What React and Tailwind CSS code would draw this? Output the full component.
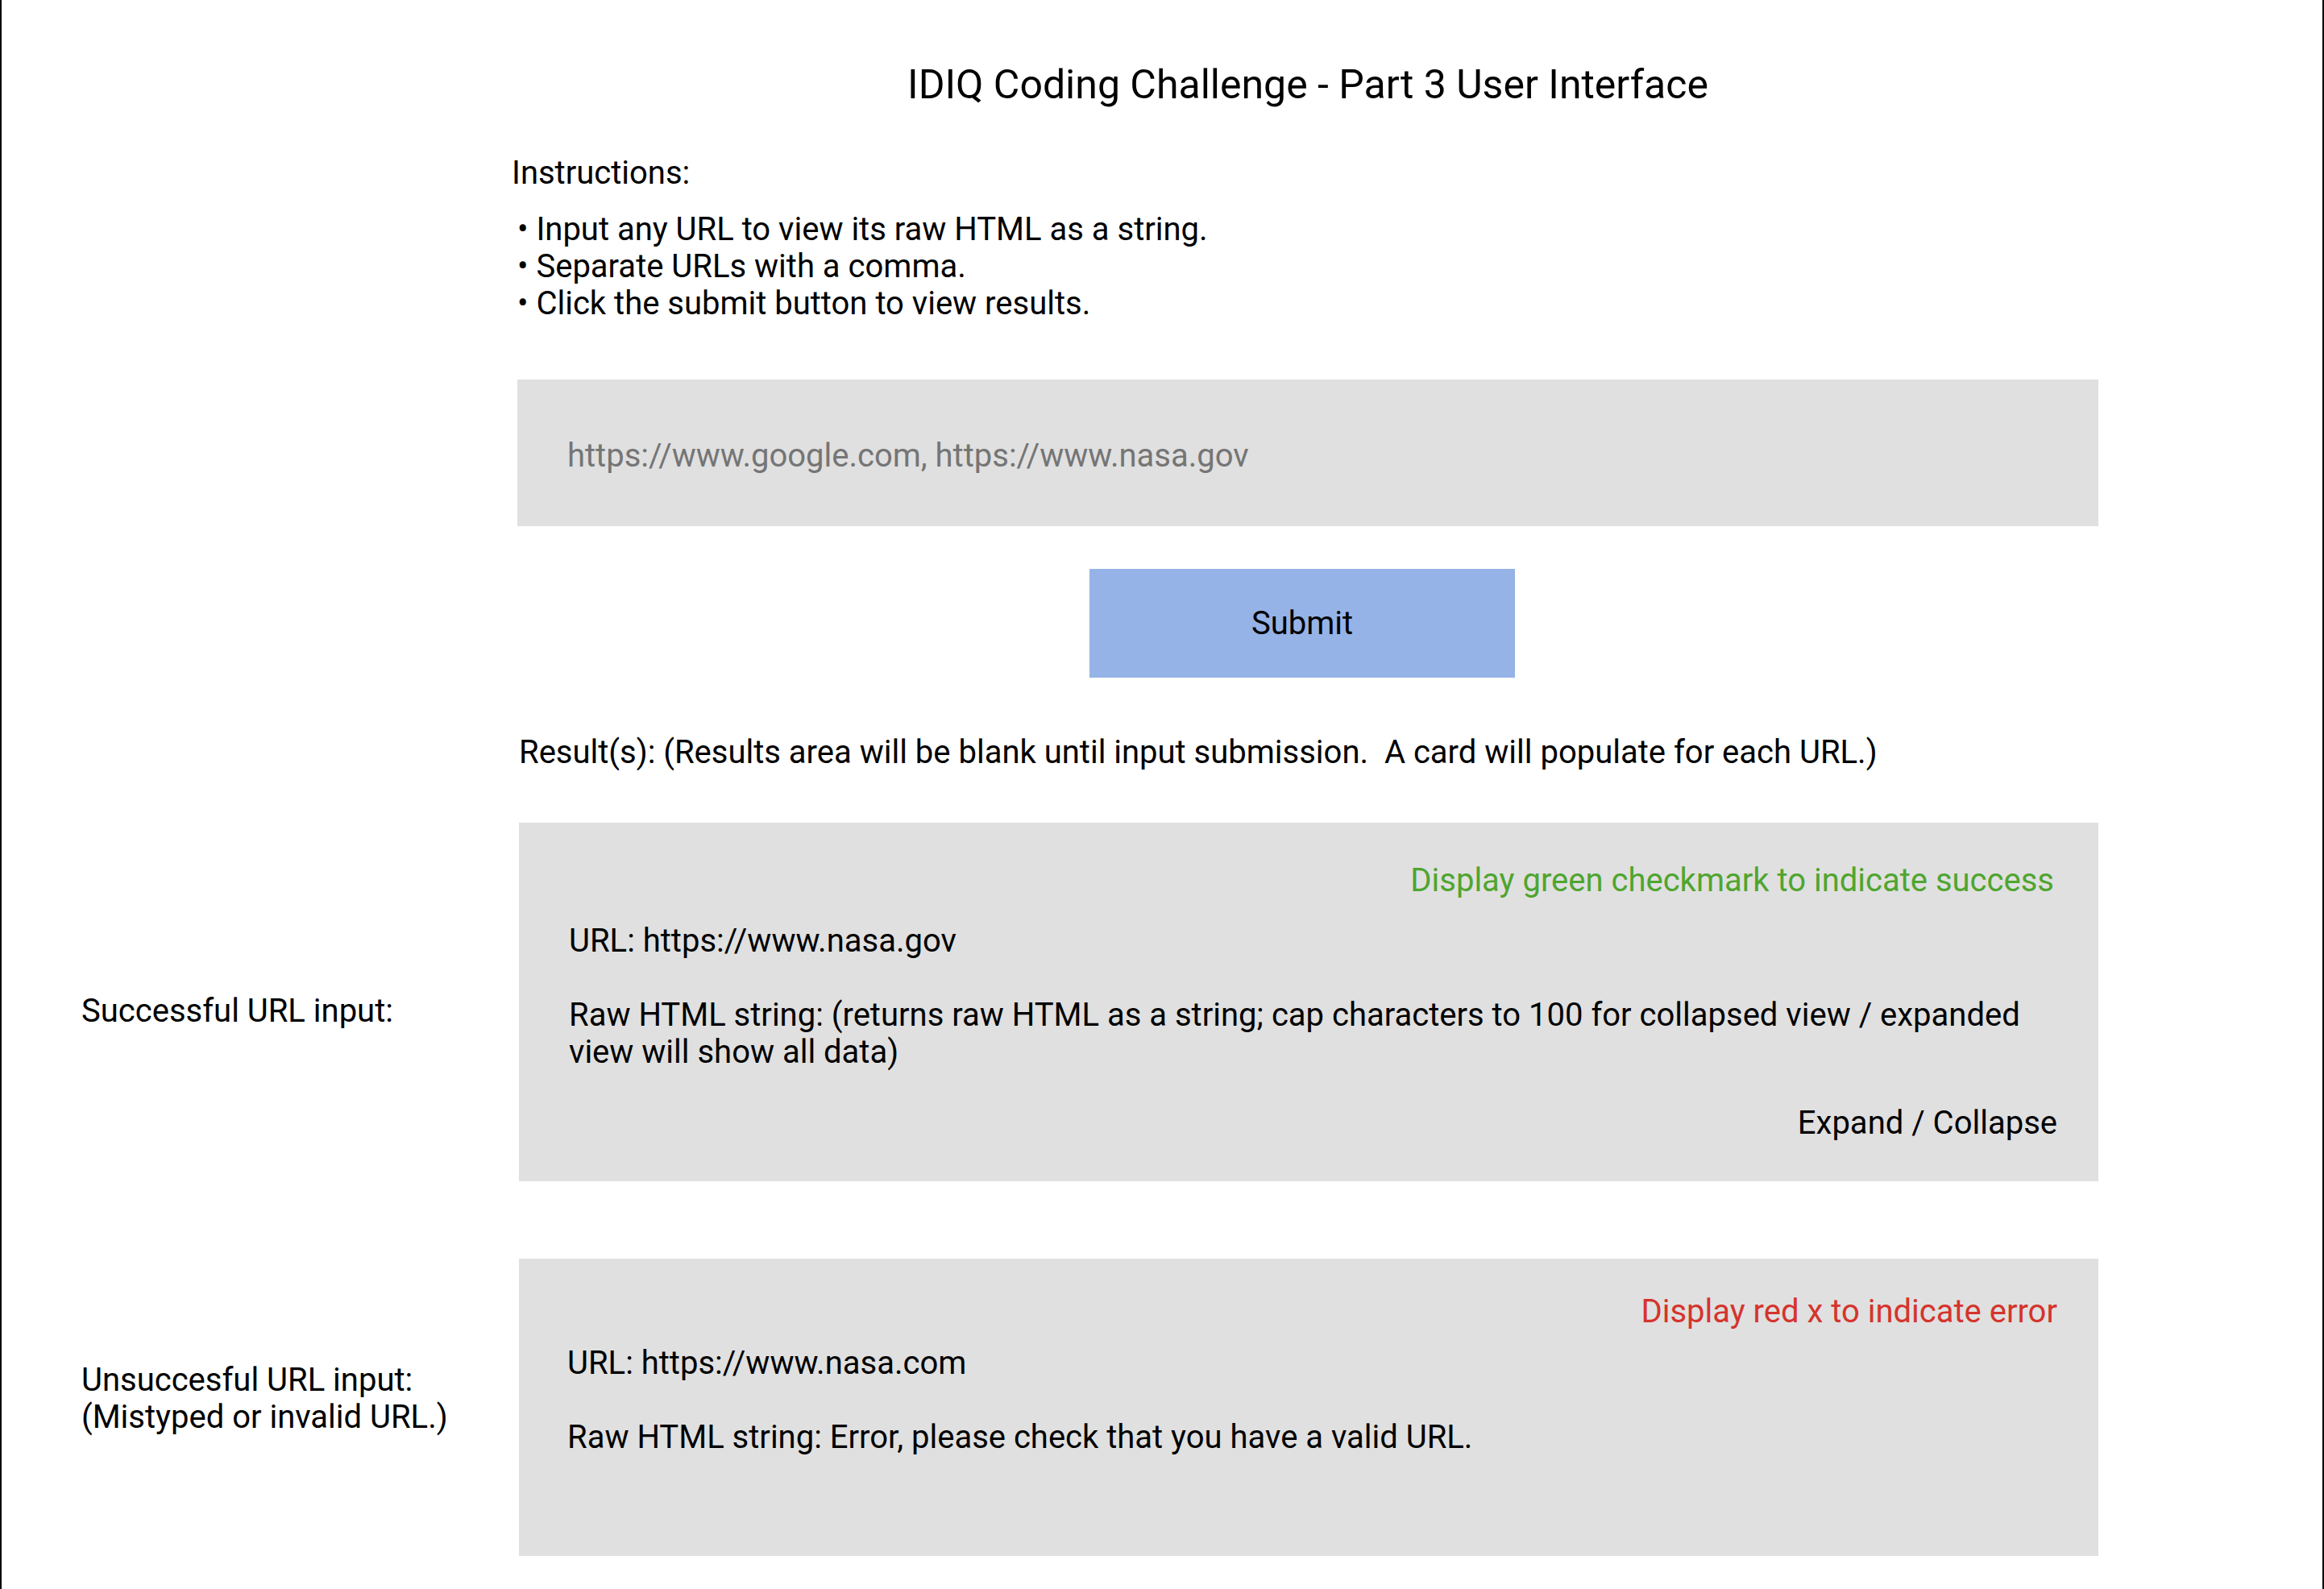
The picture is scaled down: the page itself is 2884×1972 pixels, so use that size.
import { useState } from 'react';

const font = { fontFamily: 'Roboto, "Liberation Sans", sans-serif' };

export default function App() {
  const [urls, setUrls] = useState('');

  return (
    <div
      className="min-h-screen w-[2884px] border-l-2 border-r-2 border-black bg-white text-black"
      style={font}
    >
      <div className="grid grid-cols-[640px_1962px]">
        {/* header + input */}
        <div />
        <div>
          <h1 className="mt-[78px] text-center text-[50px] leading-[54px] font-normal">
            IDIQ Coding Challenge - Part 3 User Interface
          </h1>
          <p className="-ml-[7px] mt-[60px] text-[40px] leading-[46px]">Instructions:</p>
          <ul className="mt-[24px] text-[40px] leading-[46px]">
            <li>• Input any URL to view its raw HTML as a string.</li>
            <li>• Separate URLs with a comma.</li>
            <li>• Click the submit button to view results.</li>
          </ul>
          <input
            value={urls}
            onChange={(e) => setUrls(e.target.value)}
            placeholder="https://www.google.com, https://www.nasa.gov"
            className="mt-[71px] block h-[182px] w-full bg-[#e0e0e0] px-[62px] pt-[6px] text-[40px] outline-none placeholder:text-[#757575]"
          />
          <button className="ml-[710px] mt-[53px] block h-[135px] w-[528px] bg-[#95b3e7] text-[40px]">
            Submit
          </button>
          <p className="ml-[2px] mt-[70px] text-[40px] leading-[46px] whitespace-pre">
            Result(s): (Results area will be blank until input submission.  A card will populate for each URL.)
          </p>
        </div>

        {/* success card */}
        <div className="mt-[64px] flex items-center pl-[99px] pt-[22px] text-[40px] leading-[46px]">
          Successful URL input:
        </div>
        <div className="mt-[64px] ml-[2px] bg-[#e0e0e0] pb-[49px] pl-[62px] pr-[55px] pt-[49px] text-[40px] leading-[46px]">
          <p className="text-right text-[#4fa52f]">Display green checkmark to indicate success</p>
          <p className="mt-[29px]">URL: https://www.nasa.gov</p>
          <p className="mt-[46px]">
            Raw HTML string: (returns raw HTML as a string; cap characters to 100 for collapsed view / expanded
            <br />
            view will show all data)
          </p>
          <div className="-mr-[4px] mt-[42px] flex justify-end">
            <button className="text-[40px] leading-[46px]">Expand / Collapse</button>
          </div>
        </div>

        {/* error card */}
        <div className="mt-[96px] flex items-center pl-[99px] text-[40px] leading-[46px]">
          <p className="-mt-[22px]">
            Unsuccesful URL input:
            <br />
            (Mistyped or invalid URL.)
          </p>
        </div>
        <div className="mt-[96px] ml-[2px] h-[369px] bg-[#e0e0e0] pl-[60px] pr-[51px] pt-[43px] text-[40px] leading-[46px]">
          <p className="text-right text-[#d4342c]">Display red x to indicate error</p>
          <p className="mt-[18px]">URL: https://www.nasa.com</p>
          <p className="mt-[46px]">Raw HTML string: Error, please check that you have a valid URL.</p>
        </div>
      </div>
    </div>
  );
}
